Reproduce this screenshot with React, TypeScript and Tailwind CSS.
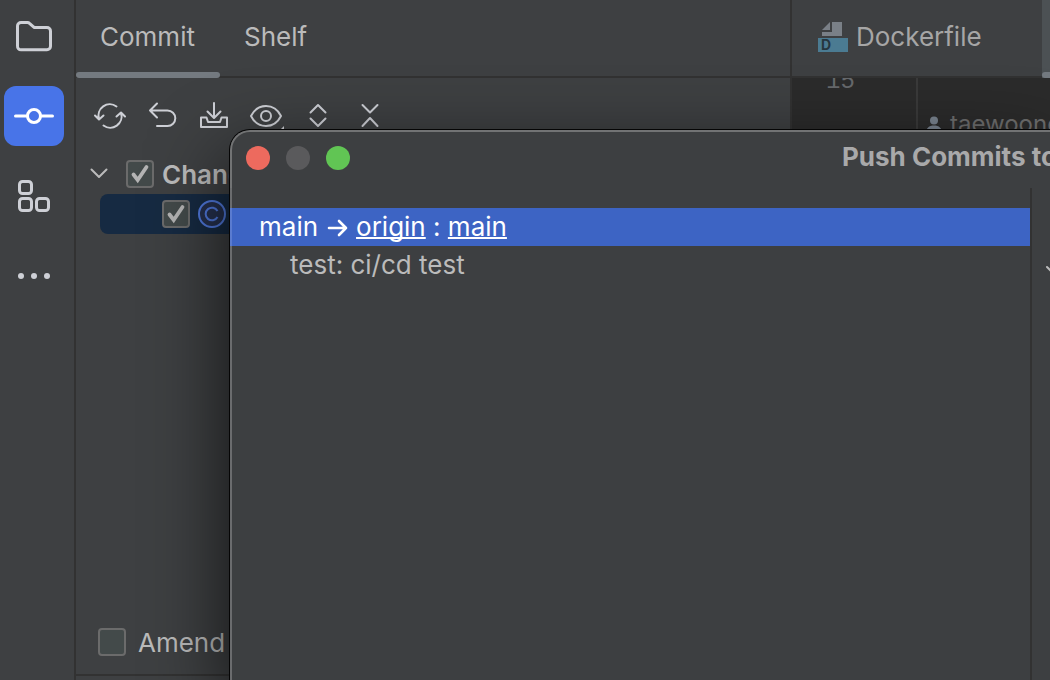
import type { ReactNode } from "react";

function Icon({ size, width = 2, children }: { size: number; width?: number; children: ReactNode }) {
  return (
    <svg
      width={size}
      height={size}
      viewBox={`0 0 ${size} ${size}`}
      fill="none"
      stroke="currentColor"
      strokeWidth={width}
      strokeLinecap="round"
      strokeLinejoin="round"
      className="shrink-0 overflow-visible"
      aria-hidden="true"
    >
      {children}
    </svg>
  );
}

const tools = [
  {
    label: "Commit",
    active: true,
    icon: (
      <>
        <circle cx="20" cy="20" r="6.5" />
        <path d="M1.5 20h12M26.5 20h12" />
      </>
    ),
  },
  {
    label: "Structure",
    active: false,
    icon: (
      <>
        <rect x="5.5" y="5.5" width="12" height="12" rx="3" />
        <rect x="5.5" y="22.5" width="12" height="12" rx="3" />
        <rect x="22.5" y="22.5" width="12" height="12" rx="3" />
      </>
    ),
  },
  {
    label: "More",
    active: false,
    icon: (
      <g fill="currentColor" stroke="none">
        <circle cx="7" cy="20" r="3" />
        <circle cx="20" cy="20" r="3" />
        <circle cx="33" cy="20" r="3" />
      </g>
    ),
  },
];

const actions = [
  {
    label: "Refresh",
    icon: (
      <>
        <path d="M22.5 6.5A11.3 11.3 0 0 0 5 19M1 15.5l4 4 4.5-4" />
        <path d="M9.5 25.5A11.3 11.3 0 0 0 27 13M31 16.5l-4-4-4.5 4" />
      </>
    ),
  },
  { label: "Rollback", icon: <path d="M11 3.5L4 10.5l7 7M4 10.5h17.5a7.8 7.8 0 0 1 0 15.6H11" /> },
  {
    label: "Shelve",
    icon: (
      <>
        <path d="M16 3v14.5M9.5 11.5l6.5 6.5 6.5-6.5" />
        <path d="M3 17.5h5.5l1.5 4.5h12l1.5-4.5H29v9.5H3z" />
      </>
    ),
  },
  {
    label: "View options",
    icon: (
      <>
        <path d="M1 16C4 10 9.5 6 16 6s12 4 15 10c-3 6-8.5 10-15 10S4 22 1 16z" />
        <circle cx="16" cy="16" r="5" />
        <path d="M34 26v3h-3z" fill="currentColor" stroke="none" />
      </>
    ),
  },
  { label: "Expand all", icon: <path d="M8.5 12.5l7.5-7.5 7.5 7.5M8.5 18.5l7.5 7.5 7.5-7.5" /> },
  { label: "Collapse all", icon: <path d="M8.5 5l7.5 7.500L23.5 5M8.5 26l7.5-8 7.5 8" /> },
];

function Checkbox({ id, label, checked = false }: { id: string; label?: string; checked?: boolean }) {
  return (
    <span className="grid size-7 shrink-0">
      <input
        id={id}
        type="checkbox"
        aria-label={label}
        defaultChecked={checked}
        className="peer col-start-1 row-start-1 size-7 appearance-none rounded border-2 border-[#6b6b6b] bg-[#434a4a]"
      />
      <svg
        viewBox="0 0 28 28"
        className="pointer-events-none invisible col-start-1 row-start-1 size-7 peer-checked:visible"
        fill="none"
        stroke="#b4b4b4"
        strokeWidth="3.8"
        aria-hidden="true"
      >
        <path d="M7.5 14.5l4.200 5.500L20.5 7" strokeLinecap="round" />
      </svg>
    </span>
  );
}

function ToolStripe() {
  return (
    <nav className="flex w-[76px] shrink-0 flex-col gap-5 border-r-2 border-[#323232] pt-1.5 pl-1 text-[#ced0d6]">
      <button type="button" aria-label="Project" className="grid size-15 place-items-center rounded-xl">
        <Icon size={40} width={3}>
          <path d="M3.5 10A3.500 3.500 0 0 1 7 6.500h6.500a3 3 0 0 1 2 .8l4 3.500a3 3 0 0 0 2 .8H33a3.500 3.500 0 0 1 3.500 3.500v15.200a3.500 3.500 0 0 1-3.500 3.500H7A3.500 3.500 0 0 1 3.500 30z" />
        </Icon>
      </button>
      {tools.map((tool) => (
        <button
          key={tool.label}
          type="button"
          aria-label={tool.label}
          className={
            tool.active
              ? "grid size-15 place-items-center rounded-xl bg-[#4874e8] text-white"
              : "grid size-15 place-items-center rounded-xl"
          }
        >
          <Icon size={40} width={3}>
            {tool.icon}
          </Icon>
        </button>
      ))}
    </nav>
  );
}

function CommitPanel() {
  return (
    <section className="flex w-[716px] shrink-0 flex-col border-r-2 border-[#323232]">
      <div className="flex h-[78px] shrink-0 border-b-2 border-[#323232]">
        <button type="button" className="-mb-0.5 flex w-36 flex-col justify-between">
          <span className="flex h-[72px] items-center pt-0.5 pl-6">Commit</span>
          <span className="h-1.5 w-full rounded-full bg-[#747a80]" />
        </button>
        <button type="button" className="flex h-[72px] items-center px-6 pt-0.5">
          Shelf
        </button>
      </div>

      <div className="flex h-[76px] shrink-0 items-center gap-5 pl-[18px] text-[#ced0d6]">
        {actions.map((action) => (
          <button key={action.label} type="button" aria-label={action.label}>
            <Icon size={32}>{action.icon}</Icon>
          </button>
        ))}
      </div>

      {/* Changed files */}
      <div className="flex-1">
        <div className="flex h-10 items-center pl-3">
          <button type="button" aria-label="Collapse changes" className="mr-4">
            <Icon size={22} width={2}>
              <path d="M3.500 6.500l7.500 7.500 7.500-7.500" />
            </Icon>
          </button>
          <Checkbox id="changes" checked />
          <label htmlFor="changes" className="pt-0.5 pl-2 font-semibold">
            Changes
          </label>
        </div>
        <div className="mr-6 ml-6 flex h-10 items-center gap-2 rounded-lg bg-[#162a42] pl-[62px]">
          <Checkbox id="file" label="Changed class" checked />
          <svg width="28" height="28" viewBox="0 0 28 28" fill="none" stroke="#5079dd" strokeWidth="2" aria-hidden="true">
            <circle cx="14" cy="14" r="13" fill="#25304d" />
            <path d="M19.500 11a6.300 6.300 0 1 0 0 6" />
          </svg>
        </div>
      </div>

      <div className="flex h-16 shrink-0 items-center gap-3 pl-[22px]">
        <Checkbox id="amend" />
        <label htmlFor="amend" className="pt-0.5">
          Amend
        </label>
      </div>
      <div className="h-1.5 shrink-0 border-t-2 border-[#323232]" />
    </section>
  );
}

function Editor() {
  return (
    <section className="flex min-w-0 flex-1 flex-col overflow-hidden">
      <div className="flex h-[78px] shrink-0 border-b-2 border-[#323232]">
        <button type="button" className="flex h-[74px] w-[250px] shrink-0 items-center gap-2 pl-[26px] text-[#a6a6a6]">
          <svg width="30" height="30" viewBox="0 0 30 30" aria-hidden="true">
            <path d="M14 0h10v14H4V10h10zM12 0v8H4z" fill="#7a8087" />
            <path d="M0 16h30v14H0z" fill="#4b7b92" />
            <text x="3" y="28" fontSize="14" fontWeight="700" fill="#26363f">
              D
            </text>
          </svg>
          Dockerfile
        </button>
        <button type="button" aria-label="Next file" className="-mb-0.5 flex flex-1 flex-col justify-end bg-[#4c5154]">
          <span className="h-1.5 w-full rounded-l-full bg-[#747a80]" />
        </button>
      </div>
      <div className="flex flex-1 overflow-hidden bg-[#2b2b2b]">
        <div className="w-[126px] shrink-0 border-r-2 border-[#3a3a3a] pl-[34px]">
          <div className="-mt-2.5 font-['Liberation_Mono',monospace] text-2xl leading-7 text-[#66696c]">15</div>
        </div>
        <div className="flex items-start gap-2 pt-[30px] pl-2 text-2xl leading-8 text-[#6e6e6e]">
          <svg width="16" height="32" viewBox="0 0 16 32" fill="#7a8490" aria-hidden="true">
            <circle cx="8" cy="12.5" r="4" />
            <path d="M0 25c0-5 3-7.500 8-7.500s8 2.500 8 7.500z" />
          </svg>
          taewoong
        </div>
      </div>
    </section>
  );
}

function PushDialog() {
  return (
    <div
      role="dialog"
      aria-labelledby="push-title"
      className="absolute top-[130px] right-0 bottom-0 left-[230px] flex flex-col overflow-hidden rounded-tl-[20px] bg-[#3d3f41] shadow-[0_0_0_1px_#050505,0_30px_80px_rgba(0,0,0,0.75)]"
    >
      <header className="flex h-[58px] shrink-0 items-center gap-4 rounded-tl-[20px] border-t-2 border-l-2 border-[#727374] pb-1 pl-3.5">
        <button type="button" aria-label="Close" className="size-6 rounded-full bg-[#ed6a5e]" />
        <button type="button" aria-label="Minimize" className="size-6 rounded-full bg-[#5a5a5c]" />
        <button type="button" aria-label="Zoom" className="size-6 rounded-full bg-[#61c554]" />
        <h1 id="push-title" className="ml-auto w-52 shrink-0 pb-0.5 font-bold whitespace-nowrap text-[#a9a9aa]">
          Push Commits to
        </h1>
      </header>
      <div className="flex flex-1">
        <ul className="min-w-0 flex-1 border-l-2 border-[#6b6c6e] pt-5">
          <li className="-ml-0.5 flex h-[38px] items-center gap-2 border-l-2 border-[#5a7bd0] bg-[#3d64c4] pl-[27px] text-white">
            main
            <Icon size={22} width={2}>
              <path d="M3 12h17M13 5l7 7-7 7" strokeWidth="2.6" />
            </Icon>
            <span>
              <a href="#origin" className="underline decoration-2 underline-offset-1 [text-decoration-skip-ink:none]">
                origin
              </a>
              {" : "}
              <a href="#main" className="underline decoration-2 underline-offset-1 [text-decoration-skip-ink:none]">
                main
              </a>
            </span>
          </li>
          <li className="flex h-[38px] items-center pl-[58px]">test: ci/cd test</li>
        </ul>
        <aside className="w-5 shrink-0 overflow-hidden border-l-2 border-[#323232] pt-[66px] pl-3">
          <button type="button" aria-label="Expand files">
            <Icon size={22}>
              <path d="M3 10l8 8 8-8" />
            </Icon>
          </button>
        </aside>
      </div>
    </div>
  );
}

export default function App() {
  return (
    <main className="relative flex h-screen overflow-hidden bg-[#3e4042] font-['Inter',sans-serif] text-[26px] leading-8 text-[#bbbbbb]">
      <ToolStripe />
      <CommitPanel />
      <Editor />
      <PushDialog />
    </main>
  );
}
